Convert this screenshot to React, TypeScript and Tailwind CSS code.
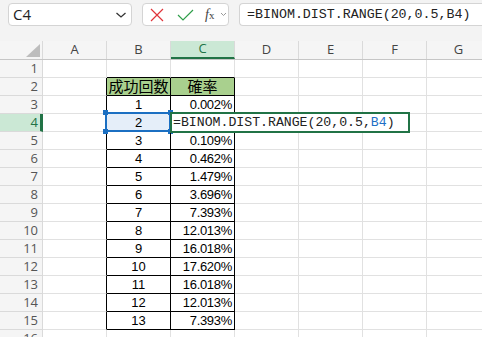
import React from "react";

const cols = ["A", "B", "C", "D", "E", "F", "G"];
const data: [string, string][] = [
  ["1", "0.002%"],
  ["2", ""],
  ["3", "0.109%"],
  ["4", "0.462%"],
  ["5", "1.479%"],
  ["6", "3.696%"],
  ["7", "7.393%"],
  ["8", "12.013%"],
  ["9", "16.018%"],
  ["10", "17.620%"],
  ["11", "16.018%"],
  ["12", "12.013%"],
  ["13", "7.393%"],
];

const cellFont = { fontFamily: '"Liberation Sans", "Noto Sans CJK JP", sans-serif' };

function Toolbar() {
  return (
    <div className="flex h-[41px] items-start gap-[10px] bg-[#f3f3f3] pl-[8px] pt-[3px]">
      <div className="flex h-[23px] w-[124px] shrink-0 items-center justify-between rounded-[4px] border border-[#d4d4d4] bg-white pl-[4px] pr-[4px]">
        <span className="text-[15px] text-[#222]" style={{ fontFamily: '"Open Sans", "Liberation Sans", sans-serif' }}>C4</span>
        <svg width="12" height="8" viewBox="0 0 12 8">
          <path d="M1.5 2 L6 6 L10.5 2" fill="none" stroke="#333" strokeWidth="1.3" />
        </svg>
      </div>
      <div className="flex h-[23px] w-[87px] shrink-0 items-center rounded-[4px] border border-[#d4d4d4] bg-white pl-[7px]">
        <svg width="14" height="14" viewBox="0 0 14 14">
          <path d="M1 1 L13 13 M13 1 L1 13" stroke="#e0343a" strokeWidth="1.2" />
        </svg>
        <svg width="17" height="14" viewBox="0 0 17 14" className="ml-[13px]">
          <path d="M1 7 L6 12 L16 2" fill="none" stroke="#2f9e4a" strokeWidth="1.2" />
        </svg>
        <span className="ml-[11px] text-[14px] italic text-[#444]" style={{ fontFamily: '"Liberation Serif", serif' }}>
          f<span className="text-[11px] not-italic">x</span>
        </span>
        <svg width="7" height="5" viewBox="0 0 7 5" className="ml-[6px]">
          <path d="M1 1 L3.5 3.5 L6 1" fill="none" stroke="#999" strokeWidth="1" />
        </svg>
      </div>
      <div className="flex h-[23px] flex-1 items-center rounded-l-[4px] border border-r-0 border-[#d4d4d4] bg-white pl-[7px]">
        <span className="whitespace-nowrap text-[13.3px] text-[#222]" style={{ fontFamily: '"Liberation Mono", monospace' }}>
          =BINOM.DIST.RANGE(20,0.5,B4)
        </span>
      </div>
    </div>
  );
}

function HeaderRow() {
  return (
    <div className="flex h-[19px] border-b border-[#c6c6c6] bg-[#f5f5f5]" style={{ fontFamily: '"Open Sans", "Liberation Sans", sans-serif' }}>
      <div className="relative w-[43px] shrink-0 border-r border-[#dadada]">
        <svg width="14" height="13" viewBox="0 0 14 13" className="absolute bottom-[2px] right-[2px]">
          <path d="M14 0 L14 13 L0 13 Z" fill="#bdbdbd" />
        </svg>
      </div>
      {cols.map((c) =>
        c === "C" ? (
          <div key={c} className="flex w-[64px] shrink-0 items-center justify-center border-b-2 border-r border-[#dadada] border-b-[#217346] bg-[#cbe8d5] text-[13px] text-[#217346]">
            {c}
          </div>
        ) : (
          <div key={c} className="flex w-[64px] shrink-0 items-center justify-center border-r border-[#dadada] text-[13px] text-[#444]">
            {c}
          </div>
        )
      )}
    </div>
  );
}

function RowHeader({ n }: { n: number }) {
  const sel = n === 4;
  return (
    <div
      className={
        sel
          ? "flex w-[43px] shrink-0 items-center justify-end border-b border-r-[3px] border-[#dadada] border-r-[#217346] bg-[#cbe8d5] pr-[2px] text-[13px] text-[#217346]"
          : "flex w-[43px] shrink-0 items-center justify-end border-b border-r border-[#dadada] bg-[#f5f5f5] pr-[4px] text-[13px] text-[#555]"
      }
      style={{ fontFamily: '"Open Sans", "Liberation Sans", sans-serif' }}
    >
      {n}
    </div>
  );
}

function Row({ n }: { n: number }) {
  const inTable = n >= 2 && n <= 15;
  const aClass = inTable
    ? "w-[64px] shrink-0 border-b border-r border-[#e1e1e1] border-r-black"
    : "w-[64px] shrink-0 border-b border-r border-[#e1e1e1]";
  let bContent: React.ReactNode = null;
  let cContent: React.ReactNode = null;
  if (n === 2) {
    bContent = "成功回数";
    cContent = "確率";
  } else if (n >= 3 && n <= 15) {
    const d = data[n - 3];
    bContent = d[0];
    cContent = d[1];
  }
  const bCls =
    n === 2
      ? "relative flex w-[64px] shrink-0 items-center justify-center border-b border-r border-black bg-[#a9d08e] text-[15px] text-black"
      : n === 4
      ? "relative flex w-[64px] shrink-0 items-center justify-center border-b border-r border-black bg-[#e5eef9] text-[13px] text-black"
      : inTable
      ? "relative flex w-[64px] shrink-0 items-center justify-center border-b border-r border-black text-[13px] text-black"
      : n === 1
      ? "w-[64px] shrink-0 border-b border-r border-[#e1e1e1] border-b-black"
      : "w-[64px] shrink-0 border-b border-r border-[#e1e1e1]";
  const cCls =
    n === 2
      ? "relative flex w-[64px] shrink-0 items-center justify-center border-b border-r border-black bg-[#a9d08e] text-[15px] text-black"
      : inTable
      ? "relative flex w-[64px] shrink-0 items-center justify-end border-b border-r border-black pr-[2px] text-[13px] tracking-[-0.3px] text-black"
      : n === 1
      ? "w-[64px] shrink-0 border-b border-r border-[#e1e1e1] border-b-black"
      : "w-[64px] shrink-0 border-b border-r border-[#e1e1e1]";
  return (
    <div className="flex h-[18px] leading-none" style={cellFont}>
      <RowHeader n={n} />
      <div className={aClass} />
      <div className={bCls}>
        {bContent}
        {n === 4 && (
          <div className="absolute left-[-2px] top-[-2px] h-[20px] w-[66px] border-2 border-[#1b6fc2]">
            <div className="absolute left-[-4px] top-[-4px] h-[5px] w-[5px] bg-[#1b6fc2]" />
            <div className="absolute right-[-4px] top-[-4px] h-[5px] w-[5px] bg-[#1b6fc2]" />
            <div className="absolute bottom-[-4px] left-[-4px] h-[5px] w-[5px] bg-[#1b6fc2]" />
            <div className="absolute bottom-[-4px] right-[-4px] h-[5px] w-[5px] bg-[#1b6fc2]" />
          </div>
        )}
      </div>
      <div className={cCls}>
        {cContent}
        {n === 4 && (
          <div className="absolute left-[-1px] top-[-2px] z-10 flex h-[21px] w-[240px] items-center border-2 border-[#217346] bg-white pl-[1px]">
            <span className="whitespace-nowrap text-[13.2px] tracking-normal text-[#222]" style={{ fontFamily: '"Liberation Mono", monospace' }}>
              =BINOM.DIST.RANGE(20,0.5,<span className="text-[#1f6fc5]">B4</span>)
            </span>
          </div>
        )}
      </div>
      {["D", "E", "F", "G"].map((c) => (
        <div key={c} className="w-[64px] shrink-0 border-b border-r border-[#e1e1e1]" />
      ))}
    </div>
  );
}

export default function App() {
  return (
    <div className="relative h-[337px] w-[482px] overflow-hidden bg-white">
      <Toolbar />
      <HeaderRow />
      {Array.from({ length: 16 }, (_, i) => (
        <Row key={i} n={i + 1} />
      ))}
    </div>
  );
}
